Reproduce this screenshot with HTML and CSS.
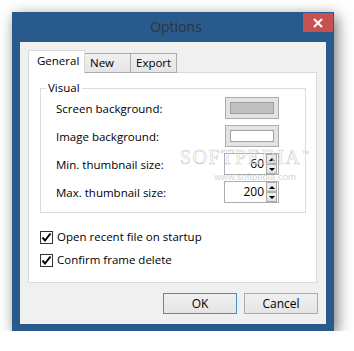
FILE: index.html
```html
<!DOCTYPE html>
<html lang="en">
<head>
    <meta charset="UTF-8">
    <title>Options</title>
    <link rel="stylesheet" href="styles.css">
</head>
<body>
    <div class="window">
        <div class="titlebar">
            <span></span>
            <span class="title">Options</span>
            <span class="close">
                <svg width="10" height="10" viewBox="0 0 10 10"><path d="M1 1 L9 9 M9 1 L1 9" stroke="#fff" stroke-width="2"/></svg>
            </span>
        </div>

        <div class="client">
            <div class="tabs">
                <div class="tab active">General</div>
                <div class="tab">New</div>
                <div class="tab">Export</div>
            </div>

            <div class="panel">
                <fieldset class="group">
                    <legend>Visual</legend>
                    <div class="row">
                        <span>Screen background:</span>
                        <span class="swatch-btn"><span class="swatch grey"></span></span>
                    </div>
                    <div class="row">
                        <span>Image background:</span>
                        <span class="swatch-btn"><span class="swatch white"></span></span>
                    </div>
                    <div class="row">
                        <span>Min. thumbnail size:</span>
                        <span class="spin">
                            <span class="value">60</span>
                            <span class="arrows">
                                <span class="arrow up"></span>
                                <span class="arrow down"></span>
                            </span>
                        </span>
                    </div>
                    <div class="row">
                        <span>Max. thumbnail size:</span>
                        <span class="spin">
                            <span class="value">200</span>
                            <span class="arrows">
                                <span class="arrow up"></span>
                                <span class="arrow down"></span>
                            </span>
                        </span>
                    </div>
                </fieldset>

                <div class="checks">
                    <div class="check">
                        <span class="box"><svg width="11" height="11" viewBox="0 0 11 11"><path d="M1.5 5.5 L4 8.5 L9.5 1.5" fill="none" stroke="#000" stroke-width="2"/></svg></span>
                        Open recent file on startup
                    </div>
                    <div class="check">
                        <span class="box"><svg width="11" height="11" viewBox="0 0 11 11"><path d="M1.5 5.5 L4 8.5 L9.5 1.5" fill="none" stroke="#000" stroke-width="2"/></svg></span>
                        Confirm frame delete
                    </div>
                </div>
            </div>

            <div class="buttons">
                <div class="button default">OK</div>
                <div class="button">Cancel</div>
            </div>
        </div>

        <!-- watermark over the dialog -->
        <div class="watermark">
            <div class="wm-big">SOFTPEDIA<sup>™</sup></div>
            <div class="wm-small">www.softpedia.com</div>
        </div>
    </div>
</body>
</html>
```

FILE: styles.css
```css
body {
    margin: 0;
    background: #fff;
    font-family: "Open Sans", "Noto Sans", sans-serif;
    font-size: 11.5px;
    color: #000;
}
.window {
    position: relative;
    box-sizing: border-box;
    width: 322px;
    height: 319px;
    margin: 12px 0 0 12px;
    padding: 0 8px 7px;
    background: #285b8c;
    box-shadow: 3px 4px 14px rgba(0,0,0,0.55);
}
.titlebar {
    display: grid;
    grid-template-columns: 30px 1fr 30px;
    height: 30px;
    margin: 0 -7px 0 -8px;
    padding-left: 7px;
}
.title {
    text-align: center;
    font-size: 14px;
    line-height: 30px;
    color: #333;
}
.close {
    display: flex;
    align-items: center;
    justify-content: center;
    height: 19px;
    margin-top: 1px;
    background: #c75050;
}
.client {
    box-sizing: border-box;
    height: 282px;
    padding: 8px 9px 10px 8px;
    background: #f0f0f0;
}
.tabs {
    position: relative;
    z-index: 1;
    display: flex;
    align-items: flex-end;
    height: 23px;
    margin-bottom: -1px;
}
.tab {
    box-sizing: border-box;
    width: 47px;
    height: 20px;
    margin-left: -1px;
    padding-left: 5px;
    line-height: 18px;
    border: 1px solid #acacac;
    background: linear-gradient(#f0f0f0, #e5e5e5);
}
.tab.active {
    position: relative;
    z-index: 1;
    width: 57px;
    height: 23px;
    margin-left: 0;
    padding-left: 8px;
    line-height: 19px;
    border-color: #d9d9d9;
    border-bottom: none;
    background: #fff;
}
.panel {
    box-sizing: border-box;
    height: 211px;
    padding: 7px 10px 0 11px;
    background: #fff;
    border: 1px solid #d9d9d9;
}
.group {
    margin: 0;
    padding: 1px 26px 9px 15px;
    border: 1px solid #dcdcdc;
}
.group legend {
    margin-left: -10px;
    padding: 0 2px;
    line-height: 16px;
}
.row {
    display: flex;
    align-items: center;
    justify-content: space-between;
    height: 22px;
    margin-bottom: 6px;
}
.row:last-child {
    margin-bottom: 0;
}
.swatch-btn {
    box-sizing: border-box;
    display: flex;
    align-items: center;
    justify-content: center;
    width: 54px;
    height: 22px;
    border: 1px solid #adadad;
    background: #e3e3e3;
}
.swatch {
    box-sizing: border-box;
    width: 44px;
    height: 12px;
    border: 1px solid #a0a0a0;
}
.swatch.grey {
    background: #c0c0c0;
}
.swatch.white {
    background: #fff;
}
.spin {
    box-sizing: border-box;
    display: flex;
    width: 55px;
    height: 22px;
    border: 1px solid #abadb3;
    background: #fff;
}
.spin .value {
    flex: 1;
    text-align: right;
    padding-right: 2px;
    font-size: 12px;
    line-height: 20px;
}
.arrows {
    display: flex;
    flex-direction: column;
    width: 11px;
    margin: 0 1px 0 0;
}
.arrow {
    box-sizing: border-box;
    display: flex;
    align-items: center;
    justify-content: center;
    height: 10px;
    border: 1px solid #acacac;
    background: linear-gradient(#f0f0f0, #e0e0e0);
}
.arrow::after {
    content: "";
    border-left: 3px solid transparent;
    border-right: 3px solid transparent;
}
.arrow.up::after {
    border-bottom: 3px solid #000;
}
.arrow.down::after {
    border-top: 3px solid #000;
}
.checks {
    display: flex;
    flex-direction: column;
    gap: 7px;
    margin-top: 16px;
}
.check {
    display: flex;
    align-items: center;
    gap: 4px;
    line-height: 16px;
}
.box {
    box-sizing: border-box;
    display: flex;
    align-items: center;
    justify-content: center;
    width: 13px;
    height: 13px;
    border: 1px solid #333;
    background: #fff;
}
.buttons {
    display: flex;
    justify-content: flex-end;
    gap: 7px;
    margin: 10px -1px 0 0;
}
.button {
    box-sizing: border-box;
    width: 74px;
    height: 21px;
    line-height: 19px;
    font-size: 12px;
    text-align: center;
    border: 1px solid #acacac;
    background: linear-gradient(#f0f0f0, #e5e5e5);
}
.button.default {
    border-color: #3c8fdc;
}
.watermark {
    position: absolute;
    left: 168px;
    top: 134px;
    pointer-events: none;
}
.wm-big {
    font-family: "Liberation Serif", serif;
    font-size: 20px;
    letter-spacing: 1.5px;
    color: rgba(255,255,255,0.6);
    -webkit-text-stroke: 0.6px rgba(160,160,160,0.5);
}
.wm-big sup {
    font-family: "Liberation Sans", sans-serif;
    font-size: 8px;
    -webkit-text-stroke: 0;
    color: rgba(170,170,170,0.6);
}
.wm-small {
    margin: 2px 0 0 34px;
    font-family: "Liberation Sans", sans-serif;
    font-size: 9.5px;
    color: rgba(170,170,170,0.55);
}
```
